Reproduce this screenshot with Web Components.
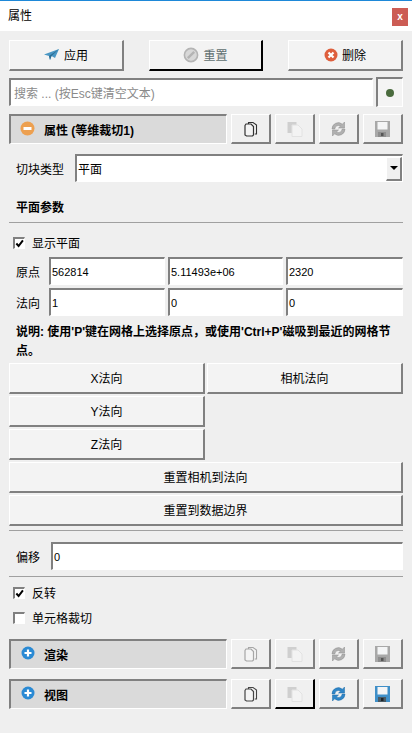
<!DOCTYPE html>
<html lang="zh">
<head>
<meta charset="utf-8">
<title>属性</title>
<style>
  html, body { margin: 0; height: 100%; background: #efefef; }
  body { font: 12px "Liberation Sans", "Noto Sans CJK SC", sans-serif; color: #000; overflow: hidden; }
</style>
</head>
<body>
<pv-panel></pv-panel>
<script>
const ICONS = {
    plane: `<svg width="16" height="14" viewBox="0 0 16 14"><path d="M0 6.5 15 1 11 10 7.5 8 6 12 5 8z" fill="#4a97c4"/><path d="M5 8 15 1 7.5 8 6 12z" fill="#2d6e94"/></svg>`,
    stop: `<svg width="16" height="16" viewBox="0 0 16 16"><circle cx="8" cy="8" r="6.6" fill="#d8d8d8" stroke="#b4b4b4" stroke-width="1.6"/><path d="M4.8 11.2 11.2 4.8" stroke="#b4b4b4" stroke-width="2.4"/></svg>`,
    cross: `<svg width="14" height="14" viewBox="0 0 14 14"><circle cx="7" cy="7" r="6.5" fill="#de5f3d"/><path d="M4.5 4.5 9.5 9.5M9.5 4.5 4.5 9.5" stroke="#fff" stroke-width="2.2"/></svg>`,
    minus: `<svg width="15" height="15" viewBox="0 0 15 15"><circle cx="7.5" cy="7.5" r="7" fill="#eda050"/><rect x="3.5" y="6" width="8" height="3" fill="#fff"/></svg>`,
    plus: `<svg width="14" height="14" viewBox="0 0 14 14"><circle cx="7" cy="7" r="6.5" fill="#2a8ad4"/><path d="M3.5 7h7M7 3.5v7" stroke="#fff" stroke-width="2.2"/></svg>`,
    copy: c => `<svg width="14" height="16" viewBox="0 0 14 16"><path d="M4.5 3V1.5H9L12.5 4V13H10.8" fill="#f4f4f4" stroke="${c}" stroke-width="1.1"/><path d="M1 4.5 2 3H7L9.5 5.5V14L8.5 15H2.5L1 14z" fill="#f4f4f4" stroke="${c}" stroke-width="1.2"/></svg>`,
    paste: `<svg width="16" height="16" viewBox="0 0 16 16"><rect x="0.5" y="1" width="9" height="11" fill="#cfcfcf"/><path d="M5 4H11L15 8V15.5H5z" fill="#f3f3f3" stroke="#e2e2e2"/></svg>`,
    sync: (a, b) => `<svg width="15" height="16" viewBox="0 0 15 16"><path d="M1 8A6.3 6.3 0 0 1 11.4 3.2L13.5 1V7H7.5L9.6 5A3.8 3.8 0 0 0 3.8 8z" fill="${a}" stroke="${b}" stroke-width=".5"/><path d="M14 8A6.3 6.3 0 0 1 3.6 12.8L1.5 15V9H7.5L5.4 11A3.8 3.8 0 0 0 11.2 8z" fill="${a}" stroke="${b}" stroke-width=".5"/></svg>`,
    save: (a, b, d) => `<svg width="15" height="16" viewBox="0 0 15 16"><rect width="15" height="16" fill="${a}"/><rect x="2.5" y="1" width="10" height="7.5" fill="#f4f5f6"/><rect x="3" y="11" width="8" height="5" fill="${b}"/><rect x="6" y="12" width="2.5" height="3" fill="${d}"/></svg>`
};

// shared bevels, windows classic look
const RAISED = `border: 1px solid #fff; border-right: 2px solid var(--edge, #808080); border-bottom: 2px solid var(--edge, #808080); box-sizing: border-box;`;
const SUNKEN = `border: 1px solid #fff; border-left: 2px solid #808080; border-top: 2px solid #808080; box-sizing: border-box;`;

class PvTitlebar extends HTMLElement {
    constructor() {
        super();
        this.attachShadow({ mode: 'open' }).innerHTML = `
            <style>
                :host { display: flex; align-items: center; justify-content: space-between; height: 30px; padding: 0 4px 0 8px; background: #fff; border-top: 1px solid #1e88d8; }
                .t { margin-bottom: 3px; }
                .close { width: 16px; height: 18px; margin-top: 1px; background: #cc5c54; color: #fff; font: bold 10px "Liberation Sans", sans-serif; display: flex; align-items: center; justify-content: center; }
            </style>
            <span class="t"><slot></slot></span>
            <span class="close">x</span>
        `;
    }
}

class PvButton extends HTMLElement {
    constructor() {
        super();
        this.attachShadow({ mode: 'open' }).innerHTML = `
            <style>
                :host { display: flex; align-items: center; justify-content: center; height: 31px; ${RAISED} background: #f3f3f3; }
                :host([dim]) { color: #5f6f6f; }
                :host([dark]) { --edge: #000; }
                .i { display: flex; }
                ::slotted([slot=icon]) { display: flex; margin-right: 4px; }
                .t { margin-bottom: 2px; }
            </style>
            <span class="i"><slot name="icon"></slot></span><span class="t"><slot></slot></span>
        `;
    }
}

class PvToolButton extends HTMLElement {
    constructor() {
        super();
        this.attachShadow({ mode: 'open' }).innerHTML = `
            <style>
                :host { display: flex; align-items: center; justify-content: center; width: 40px; height: 30px; flex: none; ${RAISED} background: #f0f0f0; }
                :host([dark]) { --edge: #000; }
            </style>
            <slot></slot>
        `;
    }
}

class PvInput extends HTMLElement {
    constructor() {
        super();
        this.attachShadow({ mode: 'open' }).innerHTML = `
            <style>
                :host { display: flex; align-items: center; height: 28px; padding-left: 1px; ${SUNKEN} background: #fff; white-space: nowrap; overflow: hidden; min-width: 0; font-size: 11px; }
                :host([hint]) { color: #8a8a8a; padding-left: 3px; font-size: 12px; }
            </style>
            <slot></slot>
        `;
    }
}

class PvCombo extends HTMLElement {
    constructor() {
        super();
        this.attachShadow({ mode: 'open' }).innerHTML = `
            <style>
                :host { display: flex; align-items: center; height: 28px; ${SUNKEN} background: #fff; }
                .v { flex: 1; padding-left: 1px; }
                .b { width: 16px; height: 24px; ${RAISED} border-top-width: 1px; background: #f0f0f0; display: flex; align-items: center; justify-content: center; }
                .b::after { content: ""; border: 4px solid transparent; border-top: 4px solid #000; border-bottom: 0; }
            </style>
            <span class="v"><slot></slot></span><span class="b"></span>
        `;
    }
}

class PvCheck extends HTMLElement {
    constructor() {
        super();
        const tick = this.hasAttribute('checked')
            ? '<svg width="9" height="9" viewBox="0 0 10 10"><path d="M1.5 5 4 7.8 8.8 1.5" fill="none" stroke="#000" stroke-width="2.2"/></svg>' : '';
        this.attachShadow({ mode: 'open' }).innerHTML = `
            <style>
                :host { display: flex; align-items: center; gap: 7px; height: 14px; padding-left: 4px; }
                .box { width: 12px; height: 12px; ${SUNKEN} background: #fff; display: flex; align-items: center; justify-content: center; }
                .t { margin-bottom: 2px; }
            </style>
            <span class="box">${tick}</span><span class="t"><slot></slot></span>
        `;
    }
}

class PvSection extends HTMLElement {
    constructor() {
        super();
        this.attachShadow({ mode: 'open' }).innerHTML = `
            <style>
                :host { display: flex; gap: 4px; height: 30px; }
                .h { flex: 1; display: flex; align-items: center; gap: 9px; padding-left: 9px; ${SUNKEN} background: #dadada; font-weight: bold; }
                .i { display: flex; width: 15px; justify-content: center; }
                .t { margin-bottom: 1px; }
            </style>
            <div class="h"><span class="i"><slot name="icon"></slot></span><span class="t"><slot></slot></span></div>
            <slot name="tools"></slot>
        `;
    }
}

class PvRule extends HTMLElement {
    constructor() {
        super();
        this.attachShadow({ mode: 'open' }).innerHTML = `
            <style>:host { display: block; height: 1px; background: #a0a0a0; }</style>
        `;
    }
}

class PvPanel extends HTMLElement {
    constructor() {
        super();
        const gray = '#a6a6a6';
        const tools = (copy, sync, save, dark) => `
            <pv-tool-button slot="tools">${ICONS.copy(copy)}</pv-tool-button>
            <pv-tool-button slot="tools" ${dark ? 'dark' : ''}>${ICONS.paste}</pv-tool-button>
            <pv-tool-button slot="tools">${sync}</pv-tool-button>
            <pv-tool-button slot="tools">${save}</pv-tool-button>`;
        const syncOff = ICONS.sync('#b0b0b0', '#8c8c8c');
        const saveOff = ICONS.save('#a8a8a8', '#8e8e8e', '#555');
        this.attachShadow({ mode: 'open' }).innerHTML = `
            <style>
                :host { display: block; width: 412px; height: 733px; background: #efefef; }
                .body { display: flex; flex-direction: column; padding: 9px 9px 0; }
                .actions { display: grid; grid-template-columns: 115px 114px 115px; justify-content: space-between; }
                .search { display: flex; gap: 3px; margin-top: 6px; align-items: center; }
                .search pv-input { flex: 1; }
                .led { width: 27px; height: 30px; box-sizing: border-box; border: 1px solid #fff; border-left: 2px solid #808080; border-top: 2px solid #808080; background: #f4f4f4; display: flex; align-items: center; justify-content: center; }
                .led::after { content: ""; width: 8px; height: 8px; border-radius: 50%; background: #4a6b3e; }
                .row { display: flex; align-items: center; }
                .label { padding-left: 7px; }
                .bold { font-weight: bold; padding-left: 7px; }
                .vec { display: grid; grid-template-columns: 40px 119px 118px 117px; align-items: center; }
                .vec pv-input { margin-right: 3px; }
                .vec pv-input:last-child { margin-right: 0; }
                .vec .l { padding-left: 7px; }
                .note { font-weight: bold; line-height: 19px; padding-left: 7px; margin: 7px 0 0; }
                .grid { display: grid; grid-template-columns: 1fr 1fr; column-gap: 2px; row-gap: 2px; margin-top: 2px; }
                .wide { grid-column: 1 / 3; }
            </style>
            <pv-titlebar>属性</pv-titlebar>
            <div class="body">
                <div class="actions">
                    <pv-button><span slot="icon">${ICONS.plane}</span>应用</pv-button>
                    <pv-button dim dark><span slot="icon">${ICONS.stop}</span>重置</pv-button>
                    <pv-button><span slot="icon">${ICONS.cross}</span>删除</pv-button>
                </div>
                <div class="search">
                    <pv-input hint>搜索 ... (按Esc键清空文本)</pv-input>
                    <div class="led"></div>
                </div>
                <pv-section style="margin-top:7px">
                    <span slot="icon">${ICONS.minus}</span>属性 (等维裁切1)
                    ${tools('#333', syncOff, saveOff)}
                </pv-section>
                <div class="row" style="margin-top:10px">
                    <span class="label" style="width:59px">切块类型</span>
                    <pv-combo style="flex:1">平面</pv-combo>
                </div>
                <div class="bold" style="margin-top:18px;line-height:17px">平面参数</div>
                <pv-rule style="margin-top:5px"></pv-rule>
                <pv-check checked style="margin-top:13px">显示平面</pv-check>
                <div class="vec" style="margin-top:7px">
                    <span class="l">原点</span><pv-input>562814</pv-input><pv-input>5.11493e+06</pv-input><pv-input>2320</pv-input>
                </div>
                <div class="vec" style="margin-top:3px">
                    <span class="l">法向</span><pv-input>1</pv-input><pv-input>0</pv-input><pv-input>0</pv-input>
                </div>
                <p class="note">说明: 使用'P'键在网格上选择原点，或使用'Ctrl+P'磁吸到最近的网格节点。</p>
                <div class="grid">
                    <pv-button>X法向</pv-button>
                    <pv-button>相机法向</pv-button>
                    <pv-button>Y法向</pv-button><span></span>
                    <pv-button>Z法向</pv-button><span></span>
                    <pv-button class="wide">重置相机到法向</pv-button>
                    <pv-button class="wide">重置到数据边界</pv-button>
                </div>
                <pv-rule style="margin-top:4px"></pv-rule>
                <div class="row" style="margin-top:11px">
                    <span class="label" style="width:35px">偏移</span>
                    <pv-input style="flex:1">0</pv-input>
                </div>
                <pv-rule style="margin-top:6px"></pv-rule>
                <pv-check checked style="margin-top:9px">反转</pv-check>
                <pv-check style="margin-top:11px">单元格裁切</pv-check>
                <pv-section style="margin-top:14px">
                    <span slot="icon">${ICONS.plus}</span>渲染
                    ${tools(gray, syncOff, saveOff)}
                </pv-section>
                <pv-section style="margin-top:10px">
                    <span slot="icon">${ICONS.plus}</span>视图
                    ${tools('#444', ICONS.sync('#2f86c8', '#1d6aa5'), ICONS.save('#3f8fc8', '#4a5a64', '#1d2328'), true)}
                </pv-section>
            </div>
        `;
    }
}

customElements.define('pv-titlebar', PvTitlebar);
customElements.define('pv-button', PvButton);
customElements.define('pv-tool-button', PvToolButton);
customElements.define('pv-input', PvInput);
customElements.define('pv-combo', PvCombo);
customElements.define('pv-check', PvCheck);
customElements.define('pv-section', PvSection);
customElements.define('pv-rule', PvRule);
customElements.define('pv-panel', PvPanel);
</script>
</body>
</html>
